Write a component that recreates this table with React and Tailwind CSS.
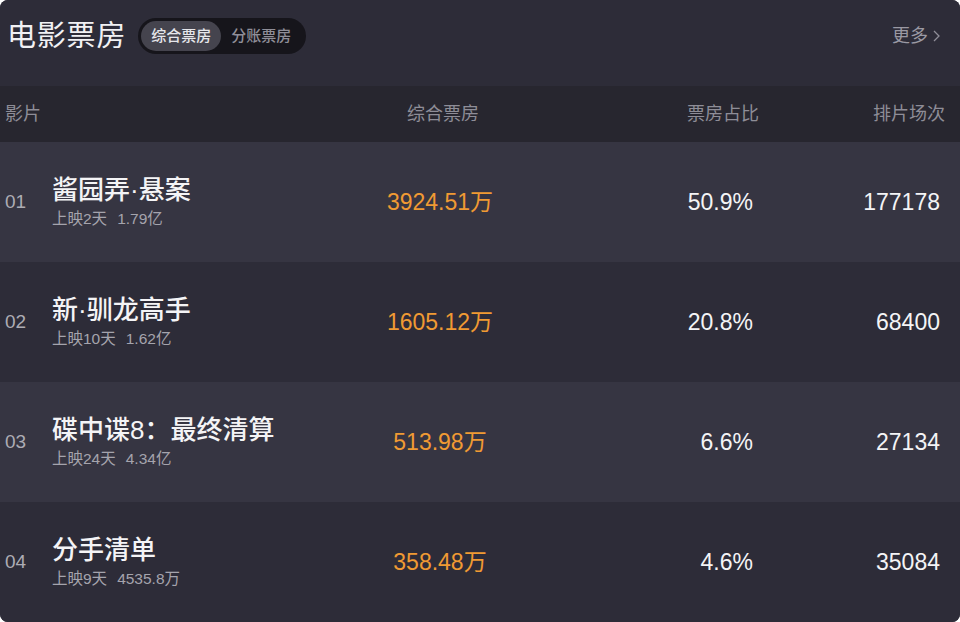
import React from "react";

const rows = [
  { no: "01", name: "酱园弄·悬案", sub1: "上映2天", sub2: "1.79亿", box: "3924.51万", pct: "50.9%", cnt: "177178" },
  { no: "02", name: "新·驯龙高手", sub1: "上映10天", sub2: "1.62亿", box: "1605.12万", pct: "20.8%", cnt: "68400" },
  { no: "03", name: "碟中谍8：最终清算", sub1: "上映24天", sub2: "4.34亿", box: "513.98万", pct: "6.6%", cnt: "27134" },
  { no: "04", name: "分手清单", sub1: "上映9天", sub2: "4535.8万", box: "358.48万", pct: "4.6%", cnt: "35084" },
];

const font = { fontFamily: '"Liberation Sans", "Noto Sans CJK SC", sans-serif' };

export default function App() {
  return (
    <div className="w-[960px] h-[622px] bg-white" style={font}>
      <div className="w-[960px] h-[622px] rounded-lg overflow-hidden bg-[#2d2c38] flex flex-col">
        {/* Title bar */}
        <div className="h-[86px] shrink-0 flex items-center pl-[7px] pr-[19px] pb-[14px] bg-[#2d2c38]">
          <div className="text-[29px] leading-none text-[#f1f1f4] tracking-[0.8px]">电影票房</div>
          <div className="ml-[12px] flex items-center h-[36px] rounded-full bg-[#16151b] p-[3px]">
            <div className="h-[30px] px-[10px] flex items-center rounded-full bg-[#45444e] text-[15px] text-[#e6e6ea] font-medium">综合票房</div>
            <div className="h-[30px] pl-[10px] pr-[12px] flex items-center text-[15px] text-[#8f8e98] font-medium">分账票房</div>
          </div>
          <div className="ml-auto flex items-center text-[18px] text-[#9a99a3]">
            <span>更多</span>
            <svg width="9" height="14" viewBox="0 0 9 14" className="ml-[4px]">
              <path d="M2 2 L7 7 L2 12" fill="none" stroke="#8f8e98" strokeWidth="1.3" />
            </svg>
          </div>
        </div>
        {/* Column header */}
        <div className="h-[56px] shrink-0 grid grid-cols-[356px_168px_241px_195px] items-center bg-[#27262f] text-[18px] text-[#8e8d97]">
          <div className="pl-[5px]">影片</div>
          <div className="text-center pl-[6px]">综合票房</div>
          <div className="text-right pr-[6px]">票房占比</div>
          <div className="text-right pr-[15px]">排片场次</div>
        </div>
        {/* Rows */}
        {rows.map((r, i) => (
          <div
            key={r.no}
            className={
              "h-[120px] shrink-0 grid grid-cols-[356px_168px_241px_195px] items-center " +
              (i % 2 === 0 ? "bg-[#363542]" : "bg-[#2d2c38]")
            }
          >
            <div className="flex items-center">
              <div className="w-[52px] pl-[5px] text-[19px] text-[#adacb4]">{r.no}</div>
              <div className="flex flex-col">
                <div className="text-[26px] leading-[34px] text-[#f4f4f6] font-medium">{r.name}</div>
                <div className="text-[15.5px] leading-[24px] text-[#a5a4ad]">
                  <span>{r.sub1}</span>
                  <span className="ml-[10px]">{r.sub2}</span>
                </div>
              </div>
            </div>
            <div className="text-center text-[23px] text-[#f09a33]">{r.box}</div>
            <div className="text-right pr-[12px] text-[23px] text-[#f4f4f6]">{r.pct}</div>
            <div className="text-right pr-[20px] text-[23px] text-[#f4f4f6]">{r.cnt}</div>
          </div>
        ))}
      </div>
    </div>
  );
}
